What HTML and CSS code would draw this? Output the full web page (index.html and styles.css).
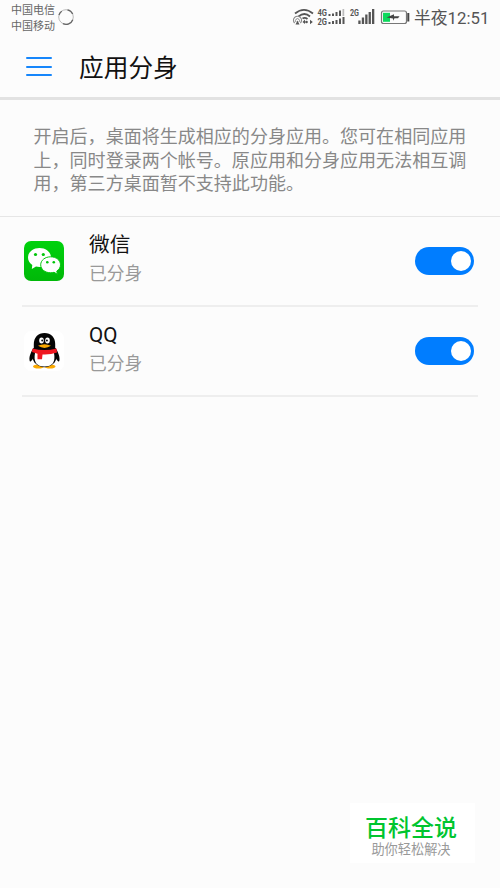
FILE: index.html
```html
<!DOCTYPE html>
<html lang="zh-CN">
<head>
    <meta charset="utf-8">
    <title>应用分身</title>
    <link rel="stylesheet" href="styles.css">
</head>

<body>
    <div class="status">
        <div class="carrier">
            <div>中国电信</div>
            <div>中国移动</div>
        </div>
        <svg class="loading" width="18" height="18" viewBox="0 0 18 18">
            <circle cx="9" cy="9" r="7.3" fill="none" stroke="#bbb" stroke-width="1"/>
            <path d="M10.5 1.8A7.3 7.3 0 0 1 15.7 6M15.8 11.7A7.3 7.3 0 0 1 6 15.7M2 7A7.3 7.3 0 0 1 4.7 3.2" fill="none" stroke="#666" stroke-width="1.3"/>
        </svg>
        <svg class="signals" width="118" height="34" viewBox="292 0 118 34">
            <!-- wifi -->
            <g fill="none" stroke="#555" stroke-width="1.8">
                <path d="M295 13.5Q304 6.300 313 13.500"/>
                <path d="M298.500 16.500Q304.500 11.600 310 16.500"/>
                <path d="M302.500 18.500Q305 17 307.500 19"/>
                <path d="M294.600 23A4 4 0 1 1 300.400 23" stroke="#888" stroke-width="1.200"/>
                <path d="M296 22A2 2 0 1 1 299 22" stroke="#888" stroke-width="1"/>
            </g>
            <path d="M297.500 20.500L299.500 24.500H295.500ZM302.500 22L305 19.500V24ZM312.800 22L310 19.800V24.200Z" fill="#555"/>
            <circle cx="306.500" cy="22" r="1.300" fill="#555"/>
            <!-- sim 1 -->
            <text x="317.500" y="16" class="net" textLength="9.500" lengthAdjust="spacingAndGlyphs">4G</text>
            <text x="317.500" y="24.500" class="net" textLength="9.500" lengthAdjust="spacingAndGlyphs">2G</text>
            <path d="M328.500 14h2v2h-2zM332 13.500h2v2.500h-2zM335.500 12h2v4h-2zM339 10.500h2v5.500h-2zM328.500 22h2v2h-2zM332 21h2v3h-2zM335.500 20h2v4h-2zM339 18.500h2v5.500h-2zM342.500 17h2v7h-2z" fill="#555"/>
            <path d="M342.500 9h1.700v7h-1.700z" fill="#bbb"/>
            <!-- sim 2 -->
            <text x="350" y="16" class="net" textLength="9" lengthAdjust="spacingAndGlyphs">2G</text>
            <path d="M358.300 20.500h2.300v3.500h-2.300zM361.800 17.500h2.300v6.500h-2.300zM365.200 14.500h2.300v9.500h-2.300zM368.600 12h2.300v12h-2.300zM372 9h2.300v15h-2.300z" fill="#555"/>
            <!-- battery -->
            <rect x="381.500" y="11" width="25" height="12.500" rx="2" fill="none" stroke="#777" stroke-width="1.200"/>
            <path d="M383 12.800h7v9h-7z" fill="#0cd95c"/>
            <path d="M407.300 13h2v8.500h-2z" fill="#444"/>
            <path d="M386.500 17.500L394 14.300V16.300H399.500L398 18.300H394.500L393 20.800V18.500Z" fill="#444"/>
        </svg>
        <div class="clock">半夜12:51</div>
    </div>

    <div class="header">
        <div class="menu">
            <span></span>
            <span></span>
            <span></span>
        </div>
        <div class="title">应用分身</div>
    </div>

    <div class="intro">
        <div>开启后，桌面将生成相应的分身应用。您可在相同应用</div>
        <div>上，同时登录两个帐号。原应用和分身应用无法相互调</div>
        <div>用，第三方桌面暂不支持此功能。</div>
    </div>

    <div class="list">
        <div class="row">
            <svg class="icon" width="40" height="40" viewBox="0 0 40 40">
                <defs>
                    <linearGradient id="green" x1="0" y1="0" x2="0" y2="1">
                        <stop offset="0" stop-color="#00d20d"/>
                        <stop offset="1" stop-color="#00b808"/>
                    </linearGradient>
                </defs>
                <rect width="40" height="40" rx="7" fill="url(#green)"/>
                <path d="M15.500 7C9 7 4 11.200 4 16.500C4 19.600 5.700 22.200 8.300 24L7.800 28L12 25.500C13.100 25.800 14.300 26 15.500 26C22 26 27 21.800 27 16.500S22 7 15.500 7Z" fill="#fff"/>
                <path d="M26.700 15.800C21 15.800 16.700 19.300 16.700 23.800S21 31.800 26.700 31.800C27.900 31.800 29 31.600 30 31.300L33.400 33.200L32.800 30C35.200 28.500 36.500 26.300 36.500 23.800C36.500 19.300 32.300 15.800 26.700 15.800Z" fill="#fff" stroke="#00c50a" stroke-width="1"/>
                <g fill="#00c50a">
                    <circle cx="11.500" cy="13.500" r="1.600"/>
                    <circle cx="19.300" cy="13.500" r="1.600"/>
                    <circle cx="23.300" cy="21.300" r="1.300"/>
                    <circle cx="29.800" cy="21.300" r="1.300"/>
                </g>
            </svg>
            <div class="info">
                <div class="name">微信</div>
                <div class="state">已分身</div>
            </div>
            <div class="toggle"></div>
        </div>
        <div class="row">
            <svg class="icon" width="40" height="40" viewBox="0 0 40 40">
                <rect width="40" height="40" rx="7" fill="#fff"/>
                <ellipse cx="14.500" cy="35.500" rx="5.500" ry="2.100" fill="#fba900"/>
                <ellipse cx="26" cy="35.500" rx="5.500" ry="2.100" fill="#fba900"/>
                <path d="M9.500 17C7.500 20 5 25 5.500 29C6 32 7.500 30 9 27.500L32 27.500C33.500 30 35 32 35.500 29C36 25 33.500 20 31.500 17Z" fill="#050505"/>
                <ellipse cx="20.500" cy="25.500" rx="12" ry="10.700" fill="#050505"/>
                <path d="M9.800 18.500V13C9.800 6.500 14 2 20.500 2S31.200 6.500 31.200 13V18.500Z" fill="#050505"/>
                <path d="M11 22H30Q32.500 35.500 20.500 35.500Q8.500 35.500 11 22Z" fill="#fff"/>
                <path d="M8.500 17.500Q20.500 20.500 32.500 17.500L33 21.500Q26 24 18.500 23.500L18 28.200H13.500V22.800L8 21Z" fill="#ef1720"/>
                <ellipse cx="17.500" cy="9.400" rx="2.300" ry="3" fill="#fff"/>
                <ellipse cx="23.500" cy="9.400" rx="2.300" ry="3" fill="#fff"/>
                <circle cx="18.200" cy="9.600" r="1" fill="#111"/>
                <circle cx="22.900" cy="9.600" r="1" fill="#111"/>
                <path d="M14 14.800Q20.500 11.500 27 14.800Q20.500 19 14 14.800Z" fill="#fba900"/>
            </svg>
            <div class="info">
                <div class="name">QQ</div>
                <div class="state">已分身</div>
            </div>
            <div class="toggle"></div>
        </div>
    </div>

    <div class="badge">
        <div class="badge-name">百科全说</div>
        <div class="badge-text">助你轻松解决</div>
    </div>
</body>
</html>
```

FILE: styles.css
```css
body {
    margin: 0;
    height: 888px;
    display: flex;
    flex-direction: column;
    overflow: hidden;
    background-color: #fcfcfc;
    font-family: Roboto, "Noto Sans CJK SC", sans-serif;
}

.status {
    display: flex;
    height: 34px;
    padding-left: 11px;
}

.carrier {
    width: 46px;
    padding-top: 3px;
    font-size: 11px;
    line-height: 15.5px;
    color: #666;
    white-space: nowrap;
}

.loading {
    margin-top: 8px;
}

.signals {
    margin-left: 217px;
}

.net {
    font-size: 8.5px;
    font-weight: bold;
    fill: #555;
}

.clock {
    margin-left: 4px;
    font-size: 16.8px;
    line-height: 36px;
    color: #555;
    white-space: nowrap;
}

.header {
    display: flex;
    align-items: center;
    height: 63px;
    padding-left: 26px;
    border-bottom: 3px solid #e2e2e2;
}

.menu {
    display: flex;
    flex-direction: column;
    gap: 6.3px;
    width: 26px;
    padding-top: 2px;
}

.menu span {
    height: 2px;
    border-radius: 1px;
    background-color: #1686fb;
}

.title {
    margin-left: 27px;
    padding-top: 7px;
    font-size: 24.7px;
    line-height: 36px;
    color: #111;
}

.intro {
    height: 91px;
    padding: 25px 0 0 33.5px;
    font-size: 18.05px;
    line-height: 23.6px;
    color: #888;
    white-space: nowrap;
    border-bottom: 1px solid #e6e6e6;
}

.list {
    padding: 0 22px;
}

.row {
    display: flex;
    align-items: center;
    height: 88px;
    padding: 0 4px 0 2px;
    border-bottom: 2px solid #eee;
}

.info {
    flex: 1;
    margin-left: 25px;
    padding-bottom: 4px;
}

.name {
    font-size: 20.7px;
    line-height: 30px;
    color: #111;
}

.state {
    font-size: 17.8px;
    line-height: 28px;
    color: #999;
}

.toggle {
    box-sizing: border-box;
    width: 59px;
    height: 28px;
    padding: 4px 3px;
    border-radius: 14px;
    background-color: #007dff;
}

.toggle::after {
    content: "";
    display: block;
    width: 20px;
    height: 20px;
    margin-left: auto;
    border-radius: 50%;
    background-color: #fff;
}

.badge {
    align-self: flex-end;
    box-sizing: border-box;
    width: 125px;
    height: 60px;
    margin: auto 25px 25px 0;
    padding-top: 12px;
    text-align: center;
    background-color: #fff;
}

.badge-name {
    padding-right: 3px;
    font-size: 23px;
    font-weight: 500;
    line-height: 28px;
    color: #00c52f;
}

.badge-text {
    padding-right: 3px;
    font-size: 13.2px;
    line-height: 14px;
    color: #999;
}
```
